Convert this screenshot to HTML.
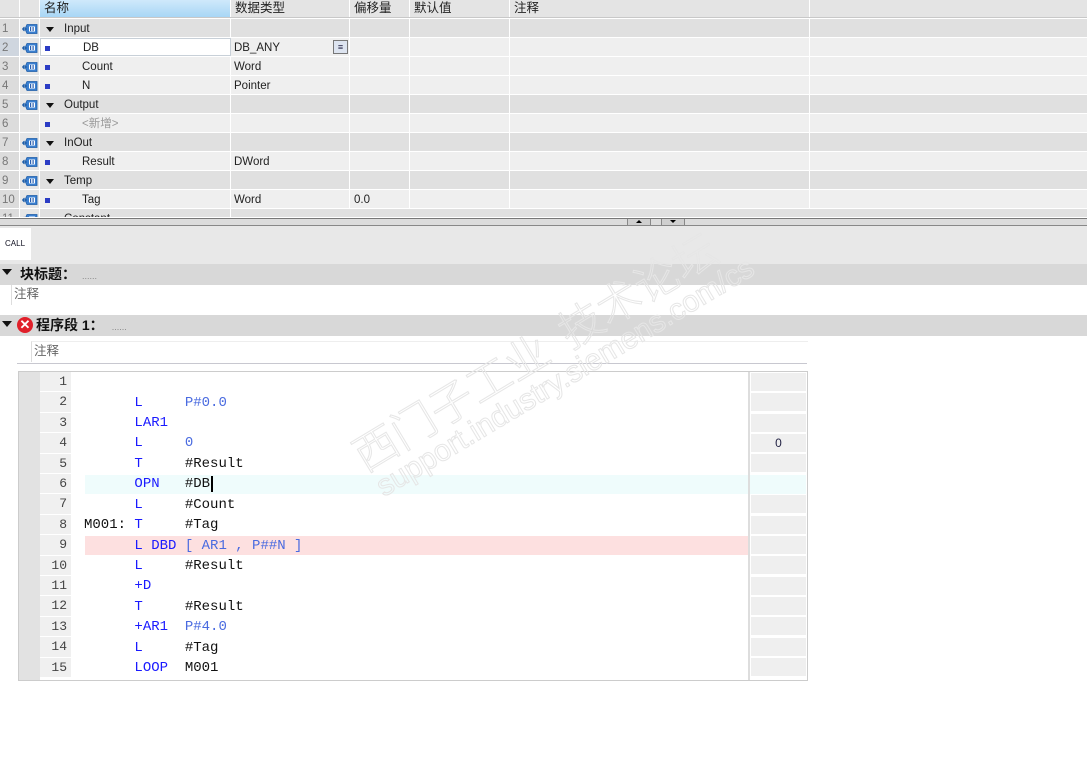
<!DOCTYPE html>
<html><head><meta charset="utf-8"><style>
*{margin:0;padding:0;box-sizing:border-box}
body{width:1087px;height:779px;background:#fff;position:relative;overflow:hidden;font-family:"Liberation Sans","Noto Sans CJK SC",sans-serif;font-size:12px;color:#222}
.a{position:absolute}
.hdr{top:0;left:0;width:1087px;height:18px;background:#e4e4e4;border-bottom:1px solid #c8c8c8}
.hc{position:absolute;top:0;height:17px;border-right:1px solid #fff;padding-left:4px;line-height:16px;font-size:12.5px}
.row{position:absolute;left:0;width:1087px;height:19px;border-bottom:1px solid #fff}
.c{position:absolute;top:0;height:18px;line-height:20px;border-right:1px solid #fff;font-size:11.5px}
.num{left:0;width:20px;color:#777;padding-left:2px;background:#dcdcdc}
.ic{left:20px;width:20px;background:#e6e6e6}
.nm{left:40px;width:191px}
.ty{left:231px;width:119px;padding-left:3px}
.of{left:350px;width:60px;padding-left:4px}
.df{left:410px;width:100px}
.cm{left:510px;width:300px}
.sq{position:absolute;left:5px;top:8px;width:5px;height:5px;background:#2b3cc4}
.tri{position:absolute;left:6px;top:8px;width:0;height:0;border-left:4px solid transparent;border-right:4px solid transparent;border-top:5px solid #111}
.code{font-family:"Liberation Mono",monospace;font-size:14px}
.ln{position:absolute;left:40px;width:31px;height:20.4px;text-align:right;padding-right:4px;color:#444;font-family:"Liberation Mono",monospace;font-size:13px;line-height:20px;background:#f0f0f0;border-bottom:1px solid #fff}
.cl{position:absolute;left:84px;height:20px;line-height:20px;white-space:pre;color:#111}
.b{color:#1a1aff}
.k{color:#4a6be0}
.rc{position:absolute;left:751px;width:55px;height:18px;background:#efefef;text-align:center;line-height:18px;font-size:12px}
.wm{position:absolute;color:transparent;-webkit-text-stroke:1px #e6e6e6;transform:rotate(-31deg);transform-origin:left bottom;white-space:nowrap}
</style></head><body>
<div class="a hdr">
<div class="hc" style="left:0;width:20px"></div>
<div class="hc" style="left:20px;width:20px"></div>
<div class="hc" style="left:40px;width:191px;background:linear-gradient(#cfe9fb,#a8d6f5)">名称</div>
<div class="hc" style="left:231px;width:119px">数据类型</div>
<div class="hc" style="left:350px;width:60px">偏移量</div>
<div class="hc" style="left:410px;width:100px">默认值</div>
<div class="hc" style="left:510px;width:300px">注释</div>
</div>
<svg width="0" height="0" style="position:absolute"><defs><g id="tg"><path d="M5 1.5 H15 V10.5 H5 L3 6 Z" fill="#3a7fd0" stroke="#1f5ea8" stroke-width=".8"/><rect x="7" y="3.5" width="6" height="5" fill="#fff"/><rect x="8" y="4" width="1.2" height="4" fill="#2a5fb0"/><rect x="10.5" y="4" width="1.2" height="4" fill="#2a5fb0"/><path d="M0.5 6 H5 M0.5 6 L2.5 4 M0.5 6 L2.5 8" stroke="#1f5ea8" stroke-width="1.2" fill="none"/></g></defs></svg>
<div class="row" style="top:19px;background:#e0e0e0"><div class="c num">1</div><div class="c ic"><svg class="a" style="left:2px;top:4px" width="16" height="12"><use href="#tg"/></svg></div><div class="c nm"><span class="tri"></span><span style="position:absolute;left:24px">Input</span></div><div class="c ty"></div><div class="c of"></div><div class="c df"></div><div class="c cm"></div></div>
<div class="row" style="top:38px;background:#efefef"><div class="c num" style="background:#cfd6df">2</div><div class="c ic"><svg class="a" style="left:2px;top:4px" width="16" height="12"><use href="#tg"/></svg></div><div class="c nm" style="background:#fff;border:1px solid #c8d0d8"><span class="sq" style="left:4px;top:7px"></span><span style="position:absolute;left:42px;top:-1px">DB</span></div><div class="c ty">DB_ANY<span class="a" style="left:102px;top:2px;width:15px;height:14px;border:1px solid #777;background:#dde4f0;font-size:9px;line-height:12px;text-align:center;color:#224">&#8801;</span></div><div class="c of"></div><div class="c df"></div><div class="c cm"></div></div>
<div class="row" style="top:57px;background:#efefef"><div class="c num">3</div><div class="c ic"><svg class="a" style="left:2px;top:4px" width="16" height="12"><use href="#tg"/></svg></div><div class="c nm"><span class="sq"></span><span style="position:absolute;left:42px">Count</span></div><div class="c ty">Word</div><div class="c of"></div><div class="c df"></div><div class="c cm"></div></div>
<div class="row" style="top:76px;background:#efefef"><div class="c num">4</div><div class="c ic"><svg class="a" style="left:2px;top:4px" width="16" height="12"><use href="#tg"/></svg></div><div class="c nm"><span class="sq"></span><span style="position:absolute;left:42px">N</span></div><div class="c ty">Pointer</div><div class="c of"></div><div class="c df"></div><div class="c cm"></div></div>
<div class="row" style="top:95px;background:#e0e0e0"><div class="c num">5</div><div class="c ic"><svg class="a" style="left:2px;top:4px" width="16" height="12"><use href="#tg"/></svg></div><div class="c nm"><span class="tri"></span><span style="position:absolute;left:24px">Output</span></div><div class="c ty"></div><div class="c of"></div><div class="c df"></div><div class="c cm"></div></div>
<div class="row" style="top:114px;background:#efefef"><div class="c num">6</div><div class="c ic"></div><div class="c nm"><span class="sq"></span><span style="position:absolute;left:42px;color:#999">&lt;新增&gt;</span></div><div class="c ty"></div><div class="c of"></div><div class="c df"></div><div class="c cm"></div></div>
<div class="row" style="top:133px;background:#e0e0e0"><div class="c num">7</div><div class="c ic"><svg class="a" style="left:2px;top:4px" width="16" height="12"><use href="#tg"/></svg></div><div class="c nm"><span class="tri"></span><span style="position:absolute;left:24px">InOut</span></div><div class="c ty"></div><div class="c of"></div><div class="c df"></div><div class="c cm"></div></div>
<div class="row" style="top:152px;background:#efefef"><div class="c num">8</div><div class="c ic"><svg class="a" style="left:2px;top:4px" width="16" height="12"><use href="#tg"/></svg></div><div class="c nm"><span class="sq"></span><span style="position:absolute;left:42px">Result</span></div><div class="c ty">DWord</div><div class="c of"></div><div class="c df"></div><div class="c cm"></div></div>
<div class="row" style="top:171px;background:#e0e0e0"><div class="c num">9</div><div class="c ic"><svg class="a" style="left:2px;top:4px" width="16" height="12"><use href="#tg"/></svg></div><div class="c nm"><span class="tri"></span><span style="position:absolute;left:24px">Temp</span></div><div class="c ty"></div><div class="c of"></div><div class="c df"></div><div class="c cm"></div></div>
<div class="row" style="top:190px;background:#efefef"><div class="c num">10</div><div class="c ic"><svg class="a" style="left:2px;top:4px" width="16" height="12"><use href="#tg"/></svg></div><div class="c nm"><span class="sq"></span><span style="position:absolute;left:42px">Tag</span></div><div class="c ty">Word</div><div class="c of">0.0</div><div class="c df"></div><div class="c cm"></div></div>
<div class="row" style="top:209px;height:9px;background:#e0e0e0;overflow:hidden"><div class="c num">11</div><div class="c ic"><svg class="a" style="left:2px;top:4px" width="16" height="12"><use href="#tg"/></svg></div><div class="c nm"><span class="tri"></span><span style="position:absolute;left:24px">Constant</span></div></div>
<div class="a" style="top:218px;left:0;width:1087px;height:8px;background:#dcdcdc;border-top:1px solid #777;border-bottom:1px solid #888"></div>
<div class="a" style="top:219px;left:627px;width:24px;height:6px;border-left:1px solid #888;border-right:1px solid #888;background:#cfcfcf"><span class="a" style="left:8px;top:1px;border-left:3px solid transparent;border-right:3px solid transparent;border-bottom:3px solid #000"></span></div>
<div class="a" style="top:219px;left:661px;width:24px;height:6px;border-left:1px solid #888;border-right:1px solid #888;background:#cfcfcf"><span class="a" style="left:8px;top:1px;border-left:3px solid transparent;border-right:3px solid transparent;border-top:3px solid #000"></span></div>
<div class="a" style="top:226px;left:0;width:1087px;height:38px;background:#e8e8e8"></div>
<div class="a" style="top:228px;left:0;width:31px;height:32px;background:#fff;font-size:8px;line-height:32px;padding-left:5px;color:#112">CALL</div>
<div class="a" style="top:264px;left:0;width:1087px;height:21px;background:#d8d8d8"></div>
<div class="a" style="top:269px;left:2px;border-left:5px solid transparent;border-right:5px solid transparent;border-top:6px solid #111"></div>
<div class="a" style="top:264px;left:20px;line-height:20px;font-size:14px;font-weight:bold;color:#111">块标题：<span style="font-weight:normal;font-size:9px;color:#888;margin-left:6px">......</span></div>
<div class="a" style="top:285px;left:11px;height:20px;border-left:1px solid #ddd;padding-left:2px;font-size:12.5px;color:#666;line-height:18px">注释</div>
<div class="a" style="top:315px;left:0;width:1087px;height:21px;background:#d8d8d8"></div>
<div class="a" style="top:321px;left:2px;border-left:5px solid transparent;border-right:5px solid transparent;border-top:6px solid #111"></div>
<div class="a" style="top:317px;left:17px;width:16px;height:16px;border-radius:50%;background:#e0202a;color:#fff;font-size:13px;font-weight:bold;text-align:center;line-height:16px">✕</div>
<div class="a" style="top:315px;left:36px;line-height:20px;font-size:14px;font-weight:bold;color:#111">程序段 1：<span style="font-weight:normal;font-size:9px;color:#888;margin-left:8px">......</span></div>
<div class="a" style="top:341px;left:31px;width:777px;height:21px;border-left:1px solid #ddd;border-top:1px solid #eee;padding-left:2px;font-size:12.5px;color:#666;line-height:18px">注释</div>
<div class="a" style="top:363px;left:17px;width:790px;height:1px;background:#c8c8d0"></div>
<div class="a" style="top:371px;left:18px;width:790px;height:310px;border:1px solid #ccc;background:#fff"></div>
<div class="a" style="top:372px;left:19px;width:21px;height:308px;background:#e2e2e2"></div>
<div class="a" style="top:372px;left:748px;width:2px;height:308px;background:#ddd"></div>
<div class="a" style="top:475px;left:85px;width:663px;height:19px;background:#effcfc"></div>
<div class="a" style="top:475px;left:750px;width:56px;height:19px;background:#effcfc"></div>
<div class="a" style="top:536px;left:85px;width:663px;height:19px;background:#fde0e0"></div>
<div class="code">
<div class="ln" style="top:372px">1</div>
<div class="ln" style="top:392.4px">2</div>
<div class="ln" style="top:412.8px">3</div>
<div class="ln" style="top:433.2px">4</div>
<div class="ln" style="top:453.6px">5</div>
<div class="ln" style="top:474px">6</div>
<div class="ln" style="top:494.4px">7</div>
<div class="ln" style="top:514.8px">8</div>
<div class="ln" style="top:535.2px">9</div>
<div class="ln" style="top:555.6px">10</div>
<div class="ln" style="top:576px">11</div>
<div class="ln" style="top:596.4px">12</div>
<div class="ln" style="top:616.8px">13</div>
<div class="ln" style="top:637.2px">14</div>
<div class="ln" style="top:657.6px">15</div>
<div class="cl" style="top:393px">      <span class="b">L</span>     <span class="k">P#0.0</span></div>
<div class="cl" style="top:413px">      <span class="b">LAR1</span></div>
<div class="cl" style="top:433px">      <span class="b">L</span>     <span class="k">0</span></div>
<div class="cl" style="top:454px">      <span class="b">T</span>     #Result</div>
<div class="cl" style="top:474px">      <span class="b">OPN</span>   #DB<span style="border-left:2px solid #000;margin-left:1px"></span></div>
<div class="cl" style="top:495px">      <span class="b">L</span>     #Count</div>
<div class="cl" style="top:515px">M001: <span class="b">T</span>     #Tag</div>
<div class="cl" style="top:536px">      <span class="b">L DBD</span> <span class="k">[ AR1 , P##N ]</span></div>
<div class="cl" style="top:556px">      <span class="b">L</span>     #Result</div>
<div class="cl" style="top:576px">      <span class="b">+D</span></div>
<div class="cl" style="top:597px">      <span class="b">T</span>     #Result</div>
<div class="cl" style="top:617px">      <span class="b">+AR1</span>  <span class="k">P#4.0</span></div>
<div class="cl" style="top:638px">      <span class="b">L</span>     #Tag</div>
<div class="cl" style="top:658px">      <span class="b">LOOP</span>  M001</div>
</div>
<div class="rc" style="top:373px"></div><div class="rc" style="top:393px"></div><div class="rc" style="top:414px"></div>
<div class="rc" style="top:434px;color:#224">0</div><div class="rc" style="top:454px"></div>
<div class="rc" style="top:495px"></div><div class="rc" style="top:516px"></div><div class="rc" style="top:536px"></div>
<div class="rc" style="top:556px"></div><div class="rc" style="top:577px"></div><div class="rc" style="top:597px"></div>
<div class="rc" style="top:617px"></div><div class="rc" style="top:638px"></div><div class="rc" style="top:658px"></div>
<div class="wm" style="left:372px;top:420px;font-size:44px;font-family:'Noto Sans CJK SC',sans-serif;font-weight:300">西门子工业&nbsp;&nbsp;技术论坛</div>
<div class="wm" style="left:388px;top:470px;font-size:30px">support.industry.siemens.com/cs</div>
</body></html>
